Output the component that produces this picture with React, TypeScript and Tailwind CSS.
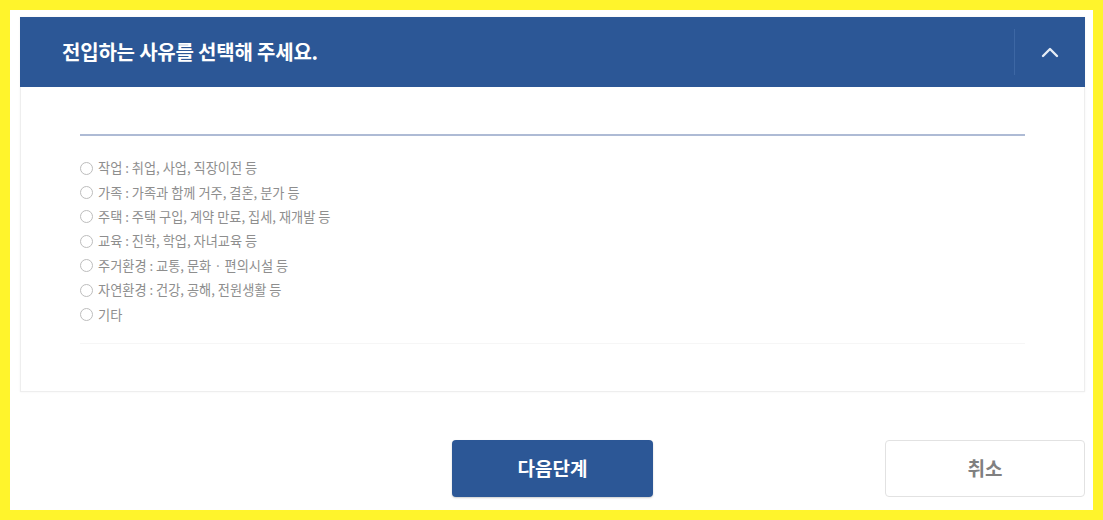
const reasons = [
  "작업 : 취업, 사업, 직장이전 등",
  "가족 : 가족과 함께 거주, 결혼, 분가 등",
  "주택 : 주택 구입, 계약 만료, 집세, 재개발 등",
  "교육 : 진학, 학업, 자녀교육 등",
  "주거환경 : 교통, 문화 · 편의시설 등",
  "자연환경 : 건강, 공해, 전원생활 등",
  "기타",
];

function ChevronUp() {
  return (
    <svg width="18" height="12" viewBox="0 0 18 12" fill="none">
      <path d="M2 10 L9 3 L16 10" stroke="#e6ecf5" strokeWidth="2.4" strokeLinecap="round" strokeLinejoin="round" />
    </svg>
  );
}

export default function App() {
  return (
    <div
      className="w-[1103px] h-[520px] border-[10px] border-[#fff42c] bg-white"
      style={{ fontFamily: '"Noto Sans CJK KR", "Noto Sans", sans-serif' }}
    >
      <div className="flex flex-col pl-[10px] pr-[8px] pt-[7px]">
        <div className="flex flex-col h-[375px] border border-[#eeeeee] shadow-[0_0_2px_rgba(0,0,0,0.06)]">
          <div className="flex items-center h-[70px] bg-[#2c5796] -mx-px -mt-px">
            <h2 className="flex-1 pl-[42px] text-[20px] font-bold text-white tracking-[-0.2px]">
              전입하는 사유를 선택해 주세요.
            </h2>
            <div className="h-[46px] w-px bg-[#3d67a4]" />
            <button className="flex items-center justify-center w-[70px] h-full">
              <ChevronUp />
            </button>
          </div>

          <div className="flex flex-col pl-[59px] pr-[59px] pt-[47px]">
            <div className="h-[2px] bg-[#aebbd5]" />
            <ul className="flex flex-col pt-[20px] pb-[16px] border-b border-[#f6f6f6]">
              {reasons.map((r) => (
                <li key={r} className="flex items-center h-[24.4px] text-[13.2px] text-[#8e8e8e]">
                  <span className="w-[13px] h-[13px] rounded-full border border-[#bdbdbd] mr-[5px] shrink-0" />
                  {r}
                </li>
              ))}
            </ul>
          </div>
        </div>

        <div className="flex items-center mt-[48px]">
          <div className="w-[432px]" />
          <button className="w-[201px] h-[57px] rounded-[4px] bg-[#2c5796] text-white text-[19px] font-bold shadow-[0_1px_2px_rgba(0,0,0,0.2)]">
            다음단계
          </button>
          <div className="flex-1" />
          <button className="w-[200px] h-[57px] rounded-[4px] bg-white border border-[#e2e2e2] text-[#808080] text-[19px] font-bold">
            취소
          </button>
        </div>
      </div>
    </div>
  );
}
